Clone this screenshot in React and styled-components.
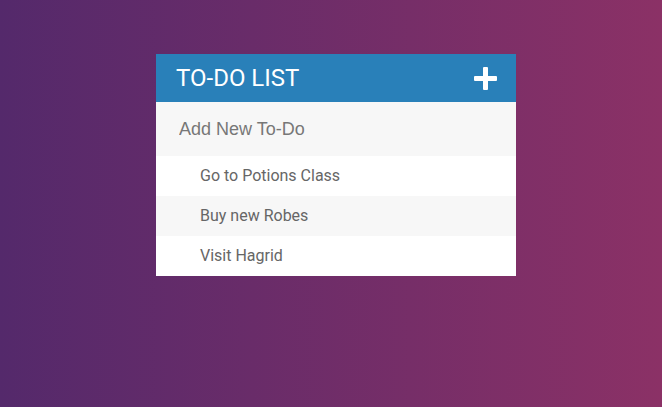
import React from "react";
import styled, { createGlobalStyle } from "styled-components";

const Global = createGlobalStyle`
  html, body { margin: 0; padding: 0; height: 100%; }
  body {
    font-family: Roboto, "Liberation Sans", sans-serif;
    background: linear-gradient(to right, #54296b, #8b3166);
    min-height: 407px;
  }
`;

const Page = styled.div`
  padding: 54px 0 0 10px;
  display: flex;
  justify-content: center;
`;

const Card = styled.div`
  width: 360px;
  background: #fff;
`;

const Header = styled.h1`
  margin: 0;
  height: 48px;
  padding: 0 19px 0 20px;
  box-sizing: border-box;
  background: #2980b9;
  color: #fff;
  font-size: 24px;
  font-weight: 400;
  text-transform: uppercase;
  display: flex;
  align-items: center;
  justify-content: space-between;
`;

const AddInput = styled.input`
  display: block;
  width: 100%;
  height: 54px;
  box-sizing: border-box;
  padding: 0 20px 0 23px;
  border: none;
  outline: none;
  background: #f7f7f7;
  font-family: "Liberation Sans", Arial, sans-serif;
  font-size: 18px;
  color: #2980b9;
  &::placeholder { color: #777; }
`;

const List = styled.ul`
  list-style: none;
  margin: 0;
  padding: 0;
`;

const Item = styled.li`
  height: 40px;
  line-height: 40px;
  padding-left: 44px;
  color: #666;
  font-size: 16px;
  background: ${(p) => (p.$alt ? "#f7f7f7" : "#fff")};
`;

const PlusIcon = () => (
  <svg width="23" height="23" viewBox="0 0 23 23">
    <rect x="9" y="0" width="5" height="23" rx="1" fill="#fff" />
    <rect x="0" y="9" width="23" height="5" rx="1" fill="#fff" />
  </svg>
);

const items = ["Go to Potions Class", "Buy new Robes", "Visit Hagrid"];

export default function App() {
  return (
    <>
      <Global />
      <Page>
        <Card>
          <Header>
            To-Do List
            <PlusIcon />
          </Header>
          <AddInput placeholder="Add New To-Do" />
          <List>
            {items.map((t, i) => (
              <Item key={t} $alt={i % 2 === 1}>{t}</Item>
            ))}
          </List>
        </Card>
      </Page>
    </>
  );
}
